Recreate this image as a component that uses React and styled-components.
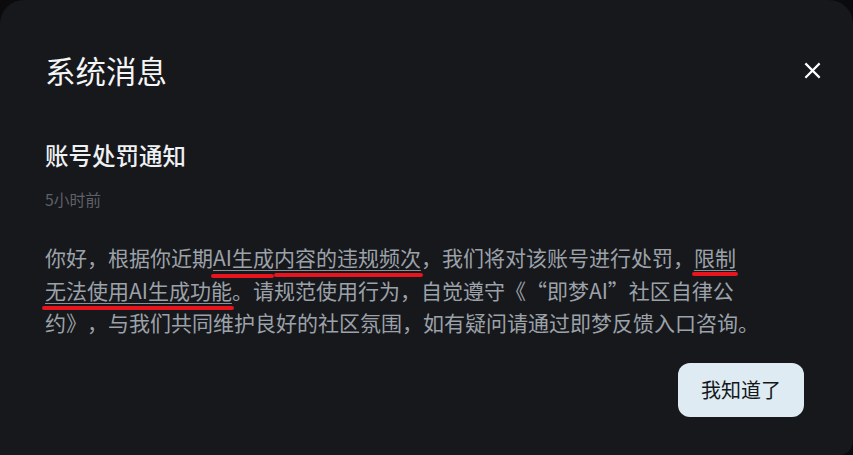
import styled, { createGlobalStyle } from 'styled-components';

const GlobalStyle = createGlobalStyle`
  html, body {
    margin: 0;
    padding: 0;
    background: #0b0b0d;
    overflow: hidden;
  }
  body {
    font-family: "Noto Sans CJK SC", "Noto Sans", "Liberation Sans", sans-serif;
  }
`;

const Dialog = styled.div`
  box-sizing: border-box;
  width: 853px;
  height: 455px;
  background: #17181c;
  border-radius: 24px 24px 14px 0;
  padding: 50px 29px 0 45px;
  display: flex;
  flex-direction: column;
`;

const Header = styled.div`
  display: flex;
  align-items: center;
  justify-content: space-between;
  height: 40px;
`;

const Title = styled.h1`
  margin: 0;
  font-size: 30.5px;
  font-weight: 400;
  line-height: 40px;
  color: #f4f5f6;
`;

const CloseButton = styled.button`
  width: 24px;
  height: 24px;
  padding: 0;
  border: none;
  background: transparent;
  display: flex;
  align-items: center;
  justify-content: center;
  cursor: pointer;
`;

const Subject = styled.h2`
  margin: 49px 0 0;
  font-size: 23.5px;
  font-weight: 500;
  line-height: 32px;
  color: #eef0f2;
`;

const Time = styled.div`
  margin-top: 18px;
  font-size: 15.8px;
  line-height: 22px;
  color: #5d6168;
`;

const Body = styled.p`
  margin: 30px 0 0;
  width: 740px;
  font-size: 21px;
  line-height: 32.5px;
  color: #9ca2a9;
  text-spacing-trim: space-all;
`;

const Mark = styled.span`
  position: relative;
  white-space: ${(p) => (p.$keep ? 'nowrap' : 'normal')};
  text-decoration: underline;
  text-decoration-color: #8a9097;
  text-underline-offset: 4px;
  text-decoration-thickness: 1px;

  &::after {
    content: '';
    position: absolute;
    left: ${(p) => p.$left ?? -2}px;
    right: ${(p) => p.$right ?? -2}px;
    bottom: ${(p) => p.$bottom ?? -5}px;
    height: 4px;
    border-radius: 2px;
    background: #e8141e;
  }
`;

const Footer = styled.div`
  display: flex;
  justify-content: flex-end;
  margin-top: 24px;
  padding-right: 20px;
`;

const OkButton = styled.button`
  width: 126px;
  height: 54px;
  border: none;
  border-radius: 12px;
  background: #deebf3;
  color: #15171a;
  font-family: inherit;
  font-size: 20px;
  cursor: pointer;
`;

const App = () => (
  <>
    <GlobalStyle />
    <Dialog>
      <Header>
        <Title>系统消息</Title>
        <CloseButton aria-label="关闭">
          <svg width="17" height="17" viewBox="0 0 16 16">
            <path d="M2 2 L14 14 M14 2 L2 14" stroke="#ffffff" strokeWidth="2" strokeLinecap="square" />
          </svg>
        </CloseButton>
      </Header>
      <Subject>账号处罚通知</Subject>
      <Time>5小时前</Time>
      <Body>
        你好，根据你近期<Mark $bottom={-6} $right={0}>AI生成</Mark>
        <Mark $left={0}>内容的违规频次</Mark>，我们将对该账号进行处罚，
        <Mark $bottom={-4}>限制</Mark>
        <Mark $left={-3} $keep>无法使用AI生成功能</Mark>。请规范使用行为，自觉遵守《“即梦AI”社区自律公约》，与我们共同维护良好的社区氛围，如有疑问请通过即梦反馈入口咨询。
      </Body>
      <Footer>
        <OkButton>我知道了</OkButton>
      </Footer>
    </Dialog>
  </>
);

export default App;
